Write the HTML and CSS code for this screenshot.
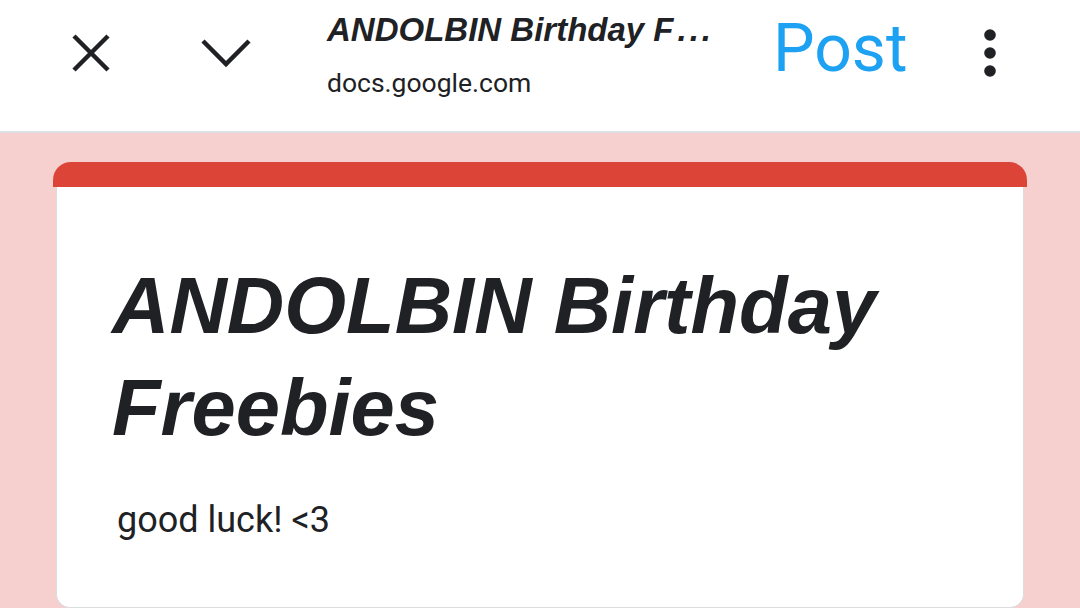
FILE: index.html
```html
<!DOCTYPE html>
<html lang="en">
<head>
    <meta charset="UTF-8">
    <meta name="viewport" content="width=device-width, initial-scale=1.0">
    <title>ANDOLBIN Birthday Freebies</title>
    <link rel="stylesheet" href="styles.css">
</head>
<body>
    <header class="topbar">
        <svg class="icon-close" width="38" height="38" viewBox="0 0 38 38">
            <path d="M2 2 L36 36 M36 2 L2 36" stroke="#202124" stroke-width="4.5" fill="none"/>
        </svg>
        <svg class="icon-chevron" width="50" height="30" viewBox="0 0 50 30">
            <path d="M2 3 L25 26 L48 3" stroke="#202124" stroke-width="4.5" fill="none"/>
        </svg>
        <div class="page-info">
            <div class="page-title">ANDOLBIN Birthday F<span class="dots">...</span></div>
            <div class="page-domain">docs.google.com</div>
        </div>
        <div class="post-btn">Post</div>
        <svg class="icon-more" width="14" height="50" viewBox="0 0 14 50">
            <circle cx="7" cy="7" r="5.8" fill="#202124"/>
            <circle cx="7" cy="25" r="5.8" fill="#202124"/>
            <circle cx="7" cy="43" r="5.8" fill="#202124"/>
        </svg>
    </header>

    <main class="form-page">
        <div class="card">
            <div class="card-top"></div>
            <div class="card-body">
                <h1 class="form-title">ANDOLBIN Birthday Freebies</h1>
                <p class="form-desc">good luck! &lt;3</p>
            </div>
        </div>
    </main>
</body>
</html>
```

FILE: styles.css
```css
body {
    margin: 0;
    padding: 0;
    background: #f6d0ce;
    color: #202124;
    font-family: Roboto, "Noto Sans", sans-serif;
    overflow: hidden;
}

.topbar {
    display: flex;
    align-items: center;
    height: 105px;
    padding: 0 0 26px 72px;
    background: #fff;
    border-bottom: 2px solid #dde0e6;
}

.icon-close {
    flex: none;
}

.icon-chevron {
    flex: none;
    margin-left: 91px;
    margin-top: 1px;
}

.page-info {
    width: 390px;
    margin-left: 76px;
    margin-top: 3px;
}

.page-title {
    font-family: "Liberation Sans", Arial, sans-serif;
    font-weight: bold;
    font-style: italic;
    font-size: 33px;
    line-height: 40px;
    white-space: nowrap;
}

.page-title .dots {
    margin-left: 4px;
    letter-spacing: 3px;
}

.page-domain {
    margin-top: 17px;
    font-size: 26.5px;
    line-height: 32px;
}

.post-btn {
    margin-left: 56px;
    margin-bottom: 8px;
    font-size: 66px;
    line-height: 66px;
    color: #1da1f2;
}

.icon-more {
    flex: none;
    margin-left: 75px;
    margin-top: 1px;
}

.form-page {
    padding: 29px 53px 0;
}

.card-top {
    height: 25px;
    background: #db4437;
    border-radius: 18px 18px 0 0;
}

.card-body {
    margin: 0 3px;
    padding: 68px 56px 66px 55px;
    background: #fff;
    border: 1px solid #dadce0;
    border-top: none;
    border-radius: 0 0 14px 14px;
}

.form-title {
    margin: 0;
    font-family: "Liberation Sans", Arial, sans-serif;
    font-weight: bold;
    font-style: italic;
    font-size: 79.5px;
    line-height: 102px;
}

.form-desc {
    margin: 41px 0 0;
    padding-left: 5px;
    font-size: 36px;
    line-height: 41px;
}
```
